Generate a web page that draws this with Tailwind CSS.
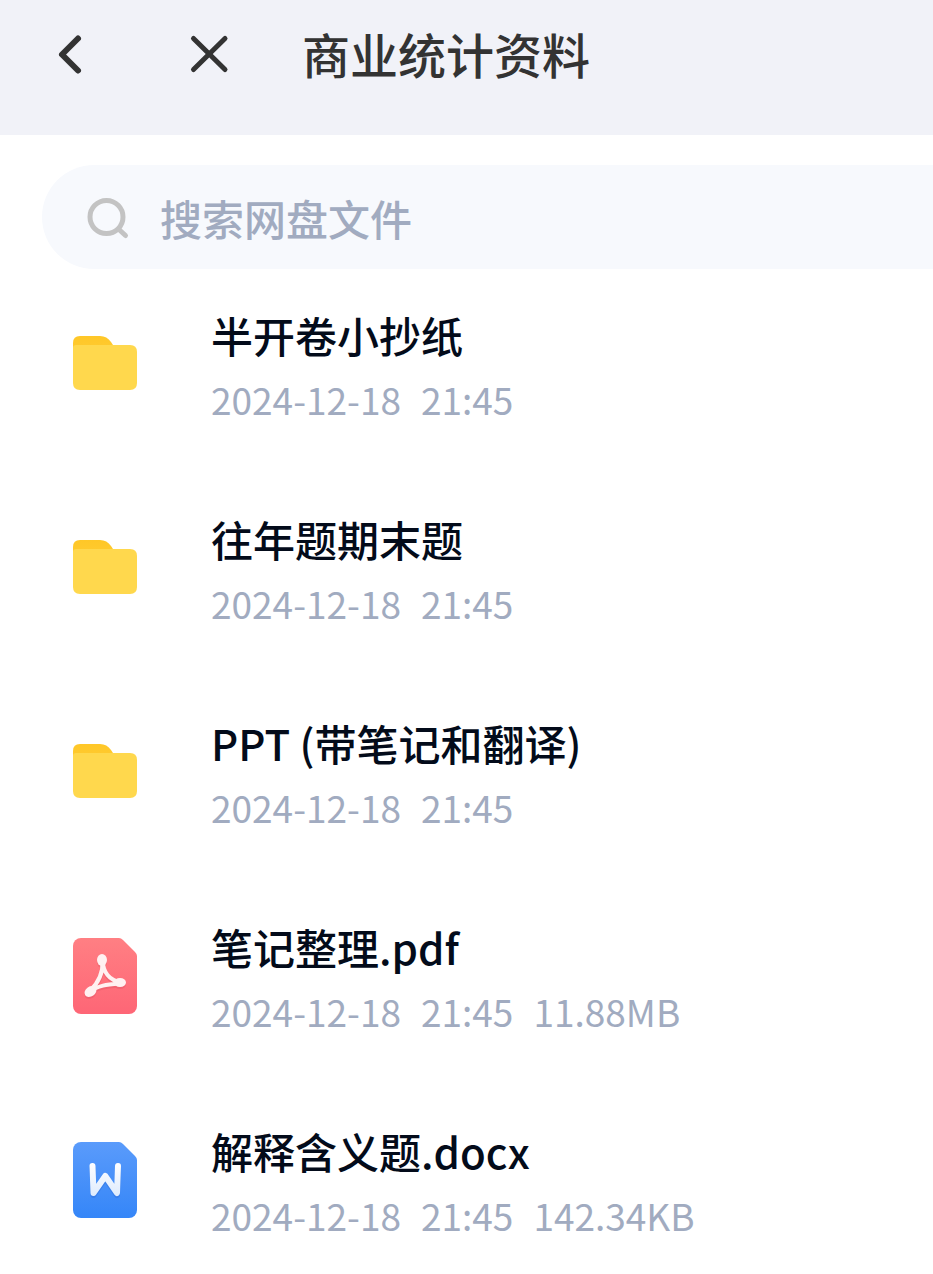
<!DOCTYPE html>
<html lang="zh-CN">
<head>
    <meta charset="UTF-8">
    <meta name="viewport" content="width=device-width, initial-scale=1.0">
    <title>商业统计资料</title>
    <script src="https://cdn.jsdelivr.net/npm/@tailwindcss/browser@4"></script>
    <style>
        body { font-family: 'Noto Sans CJK SC', sans-serif; }
    </style>
</head>
<body class="bg-white overflow-x-hidden">
    <!-- Header -->
    <header class="flex items-start h-[135px] pt-6 pl-10 bg-[#f1f2f8] text-[#333333]">
        <button type="button" aria-label="返回" class="size-15">
            <svg class="size-15" viewBox="0 0 60 60" fill="none" stroke="currentColor" stroke-width="6" stroke-linecap="round" stroke-linejoin="round"><path d="M38 14.500 22 30.500 38 46.500"/></svg>
        </button>
        <button type="button" aria-label="关闭" class="ml-20 size-15">
            <svg class="size-15" viewBox="0 0 60 60" fill="none" stroke="currentColor" stroke-width="5" stroke-linecap="round"><path d="M13.500 14.500 45 45.500M45 14.500 13.500 45.500"/></svg>
        </button>
        <h1 class="ml-[62px] text-5xl leading-[58px] font-medium whitespace-nowrap">商业统计资料</h1>
    </header>

    <!-- Search -->
    <form class="mt-[30px] ml-[42px]">
        <label class="flex items-center h-[104px] pl-[42px] rounded-l-full bg-[#f7f9fd]">
            <svg class="size-12 shrink-0" viewBox="0 0 48 48" fill="none" stroke="#c3c3c3" stroke-width="5" stroke-linecap="round"><circle cx="22.500" cy="24" r="16.500"/><path d="m35 36.500 6.500 6"/></svg>
            <input type="search" aria-label="搜索网盘文件" placeholder="搜索网盘文件" class="flex-1 min-w-0 ml-7 h-16 text-[42px] font-medium text-[#030b1a] placeholder:text-[#a1abc0] outline-none">
        </label>
    </form>

    <!-- File list -->
    <main>
        <ul class="flex flex-col gap-22 pt-10 pl-[72px] pb-9">
            <li class="flex gap-[73px]">
                <svg class="w-[66px] h-[110px] shrink-0" viewBox="0 0 66 110"><use href="#folder"/></svg>
                <div class="whitespace-nowrap">
                    <a href="#" class="block text-[42px] leading-[52px] font-medium text-[#030b1a]">半开卷小抄纸</a>
                    <p class="flex gap-5 mt-3 text-[37px] leading-[52px] text-[#a1abc0]"><span>2024-12-18</span><span>21:45</span></p>
                </div>
            </li>
            <li class="flex gap-[73px]">
                <svg class="w-[66px] h-[110px] shrink-0" viewBox="0 0 66 110"><use href="#folder"/></svg>
                <div class="whitespace-nowrap">
                    <a href="#" class="block text-[42px] leading-[52px] font-medium text-[#030b1a]">往年题期末题</a>
                    <p class="flex gap-5 mt-3 text-[37px] leading-[52px] text-[#a1abc0]"><span>2024-12-18</span><span>21:45</span></p>
                </div>
            </li>
            <li class="flex gap-[73px]">
                <svg class="w-[66px] h-[110px] shrink-0" viewBox="0 0 66 110"><use href="#folder"/></svg>
                <div class="whitespace-nowrap">
                    <a href="#" class="block text-[42px] leading-[52px] font-medium text-[#030b1a]">PPT (带笔记和翻译)</a>
                    <p class="flex gap-5 mt-3 text-[37px] leading-[52px] text-[#a1abc0]"><span>2024-12-18</span><span>21:45</span></p>
                </div>
            </li>
            <li class="flex gap-[73px]">
                <svg class="w-[66px] h-[110px] shrink-0" viewBox="0 -3 66 110">
                    <path d="M9 14h38q2 0 4 2l12 12q2 2 2 4v50a8 8 0 0 1-8 8H9a8 8 0 0 1-8-8V22a8 8 0 0 1 8-8Z" fill="url(#pdfFill)"/>
                    <g color="#d84a5c" opacity=".3" transform="translate(0 2)"><use href="#pdfMark"/></g>
                    <g color="#fff1f1"><use href="#pdfMark"/></g>
                </svg>
                <div class="whitespace-nowrap">
                    <a href="#" class="block text-[42px] leading-[52px] font-medium text-[#030b1a]">笔记整理.pdf</a>
                    <p class="flex gap-5 mt-3 text-[37px] leading-[52px] text-[#a1abc0]"><span>2024-12-18</span><span>21:45</span><span>11.88MB</span></p>
                </div>
            </li>
            <li class="flex gap-[73px]">
                <svg class="w-[66px] h-[110px] shrink-0" viewBox="0 -3 66 110">
                    <path d="M9 14h38q2 0 4 2l12 12q2 2 2 4v50a8 8 0 0 1-8 8H9a8 8 0 0 1-8-8V22a8 8 0 0 1 8-8Z" fill="url(#docFill)"/>
                    <g fill="none" stroke-width="6" stroke-linecap="round" stroke-linejoin="round">
                        <path d="M20.500 40 21.500 67 33.300 50 45 67 46 40" stroke="#2361c9" opacity=".3"/>
                        <path d="M20.500 38 21.500 65 33.300 48 45 65 46 38" stroke="url(#docMark)"/>
                    </g>
                </svg>
                <div class="whitespace-nowrap">
                    <a href="#" class="block text-[42px] leading-[52px] font-medium text-[#030b1a]">解释含义题.docx</a>
                    <p class="flex gap-5 mt-3 text-[37px] leading-[52px] text-[#a1abc0]"><span>2024-12-18</span><span>21:45</span><span>142.34KB</span></p>
                </div>
            </li>
        </ul>
    </main>

    <!-- Shared icon shapes -->
    <svg class="absolute size-0" aria-hidden="true">
        <defs>
            <linearGradient id="folderTab" x1="0" y1="0" x2="0" y2="1"><stop offset="0" stop-color="#ffc727"/><stop offset="1" stop-color="#ffcb32"/></linearGradient>
            <linearGradient id="pdfFill" x1="0" y1="0" x2="0" y2="1"><stop offset="0" stop-color="#ff7f83"/><stop offset="1" stop-color="#fe6676"/></linearGradient>
            <linearGradient id="docFill" x1="0" y1="0" x2="0" y2="1"><stop offset="0" stop-color="#5a9bfb"/><stop offset="1" stop-color="#3586f8"/></linearGradient>
            <linearGradient id="docMark" gradientUnits="userSpaceOnUse" x1="0" y1="34" x2="0" y2="70"><stop offset="0" stop-color="#ffffff"/><stop offset="1" stop-color="#dceafd"/></linearGradient>
            <g id="folder">
                <path d="M1 45V34q0-7 7-7h20q7 0 11 6l4 6v6Z" fill="url(#folderTab)"/>
                <path d="M1 39q0-3 3-3h54q7 0 7 7v31q0 7-7 7H8q-7 0-7-7Z" fill="#ffd84d"/>
            </g>
            <g id="pdfMark">
                <path d="M30.500 38C31 48 27 58 18 67M31 38C31 47 37 57 49 58M18 68C26 61 36 60.500 49 59.500" fill="none" stroke="currentColor" stroke-width="4"/>
                <ellipse cx="30" cy="36" rx="5" ry="6" fill="currentColor"/>
                <ellipse cx="48" cy="58.500" rx="6" ry="4.500" fill="currentColor"/>
                <ellipse cx="18.500" cy="67.500" rx="6.500" ry="4.800" transform="rotate(-35 18.500 67.500)" fill="currentColor"/>
            </g>
        </defs>
    </svg>
</body>
</html>
